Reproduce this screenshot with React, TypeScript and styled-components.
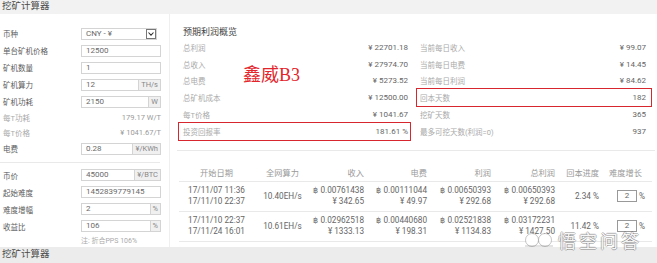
import React from "react";
import styled, {createGlobalStyle} from "styled-components";

const GlobalStyle = createGlobalStyle`
  html, body {
    margin: 0;
    padding: 0;
    background: #fff;
  }
  body {
    font-family: Roboto, "Noto Sans CJK SC", sans-serif;
    width: 657px;
    height: 263px;
    overflow: hidden;
  }
`;

const Page = styled.div`
  position: relative;
  width: 657px;
  height: 263px;
  display: flex;
  flex-flow: column;
  overflow: hidden;
`;

const Bar = styled.div<{$bottom?: boolean}>`
  height: ${p => p.$bottom ? 16 : 14}px;
  background: ${p => p.$bottom ? '#ececec' : '#f2f2f2'};
  color: #4a4a4a;
  font-size: 9.5px;
  line-height: ${p => p.$bottom ? 13 : 11}px;
  padding-left: 2px;
  white-space: nowrap;
`;

const Main = styled.div`
  display: flex;
  height: 233px;
  overflow: hidden;
`;

const Left = styled.div`
  width: 170px;
  box-sizing: border-box;
  border-right: 1px solid #efefef;
  padding: 11px 9px 0 3px;
`;

const FormRow = styled.div<{$h?: number}>`
  display: grid;
  grid-template-columns: 78px 80px;
  align-items: center;
  height: ${p => p.$h ?? 17}px;
  font-size: 7.5px;
`;

const Label = styled.span<{$muted?: boolean}>`
  color: ${p => p.$muted ? '#aaa' : '#5c5c5c'};
  white-space: nowrap;
`;

const Field = styled.div<{$w?: number}>`
  display: flex;
  box-sizing: border-box;
  width: ${p => p.$w ?? 80}px;
  height: 12px;
  border: 1px solid #d4d4d4;
  background: #fff;
`;

const FieldValue = styled.span`
  flex: 1;
  padding-left: 4px;
  font-size: 8px;
  line-height: 10px;
  color: #6a6a6a;
  white-space: nowrap;
`;

const Suffix = styled.span`
  border-left: 1px solid #d4d4d4;
  background: #f0f0f0;
  color: #888;
  font-size: 7.5px;
  line-height: 10px;
  padding: 0 2px;
  white-space: nowrap;
`;

const Arrow = styled.span`
  box-sizing: border-box;
  width: 10px;
  height: 10px;
  border: 1px solid #777;
  display: flex;
  align-items: center;
  justify-content: center;
`;

const Computed = styled.span`
  text-align: right;
  color: #999;
  font-size: 7.5px;
`;

const Divider = styled.div<{$inset?: number}>`
  height: 1px;
  background: #e9e9e9;
  margin: ${p => p.$inset ? `10px -${p.$inset}px 0` : '4.5px 0 4px -3px'};
`;

const Note = styled.div`
  margin-left: 78px;
  height: 12px;
  line-height: 12px;
  font-size: 7px;
  color: #aaa;
  white-space: nowrap;
`;

const Right = styled.div`
  flex: 1;
  padding: 11px 4px 0 9px;
`;

const SectionTitle = styled.div`
  height: 14px;
  line-height: 14px;
  padding-left: 4px;
  font-size: 9px;
  color: #444;
`;

const Summary = styled.div`
  display: grid;
  grid-template-columns: 231px 234px;
  column-gap: 7px;
`;

const SumCol = styled.div`
  display: flex;
  flex-flow: column;
`;

const SumRow = styled.div<{$right?: boolean, $hit?: boolean}>`
  display: flex;
  justify-content: space-between;
  align-items: center;
  height: 16.8px;
  padding: ${p => p.$right ? '0 5px 0 3px' : '0 2px 0 4px'};
  font-size: 7.5px;
  outline: ${p => p.$hit ? '1px solid #d7262e' : 'none'};

  & span:first-child {
    color: #aaa;
  }

  & span:last-child {
    color: #666;
    font-size: 8px;
  }
`;

const Table = styled.table`
  margin-top: 12px;
  width: 473px;
  border-collapse: collapse;
  table-layout: fixed;
  font-size: 8.2px;
  color: #666;
`;

const Th = styled.th<{$align?: string}>`
  height: 18px;
  padding: 0 3px 0 0;
  font-weight: normal;
  color: #999;
  text-align: ${p => p.$align ?? 'right'};
  white-space: nowrap;
`;

const Tr = styled.tr`
  border-top: 1px solid #e9e9e9;
  border-bottom: 1px solid #e9e9e9;
`;

const Td = styled.td<{$align?: string}>`
  height: 29px;
  padding: 0 3px 0 0;
  line-height: 11.5px;
  text-align: ${p => p.$align ?? 'right'};
  white-space: nowrap;
`;

const Growth = styled.div`
  display: flex;
  align-items: center;
  gap: 2px;
  padding-left: 15px;
  color: #666;
`;

const GrowthBox = styled.span`
  box-sizing: border-box;
  width: 20px;
  height: 12px;
  border: 1px solid #999;
  text-align: center;
  line-height: 10px;
  font-size: 8px;
`;

const Stamp = styled.div`
  position: absolute;
  left: 243px;
  top: 60px;
  font-family: "Liberation Serif", "Noto Sans CJK SC", serif;
  font-size: 18px;
  color: #e3242b;
  white-space: nowrap;
`;

const Mark = styled.div`
  position: absolute;
  left: 523px;
  top: 227px;
  display: flex;
  align-items: center;
  gap: 3px;
  font-size: 18px;
  letter-spacing: 3px;
  color: rgba(255, 255, 255, 0.95);
  text-shadow: 1px 0 0 rgba(0, 0, 0, 0.25), -1px 0 0 rgba(0, 0, 0, 0.25),
  0 1px 0 rgba(0, 0, 0, 0.25), 0 -1px 0 rgba(0, 0, 0, 0.25);
  white-space: nowrap;
`;

const inputs = [
    {label: '单台矿机价格', value: '12500'},
    {label: '矿机数量', value: '1'},
    {label: '矿机算力', value: '12', unit: 'TH/s'},
    {label: '矿机功耗', value: '2150', unit: 'W'},
];

const coinInputs = [
    {label: '币价', value: '45000', unit: '¥/BTC'},
    {label: '起始难度', value: '1452839779145'},
    {label: '难度增幅', value: '2', unit: '%'},
    {label: '收益比', value: '106', unit: '%'},
];

const totals = [
    ['总利润', '¥ 22701.18'],
    ['总收入', '¥ 27974.70'],
    ['总电费', '¥ 5273.52'],
    ['总矿机成本', '¥ 12500.00'],
    ['每T价格', '¥ 1041.67'],
    ['投资回报率', '181.61 %'],
];

const daily = [
    ['当前每日收入', '¥ 99.07'],
    ['当前每日电费', '¥ 14.45'],
    ['当前每日利润', '¥ 84.62'],
    ['回本天数', '182'],
    ['挖矿天数', '365'],
    ['最多可挖天数(利润=0)', '937'],
];

const periods = [
    {
        from: '17/11/07 11:36', to: '17/11/10 22:37', hash: '10.40EH/s',
        income: ['0.00761438', '342.65'], power: ['0.00111044', '49.97'],
        profit: ['0.00650393', '292.68'], total: ['0.00650393', '292.68'], progress: '2.34 %',
    },
    {
        from: '17/11/10 22:37', to: '17/11/24 16:01', hash: '10.61EH/s',
        income: ['0.02962518', '1333.13'], power: ['0.00440680', '198.31'],
        profit: ['0.02521838', '1134.83'], total: ['0.03172231', '1427.50'], progress: '11.42 %',
    },
];

const Input: React.FC<{value: string, unit?: string}> = ({value, unit}) =>
    <Field>
        <FieldValue>{value}</FieldValue>
        {unit && <Suffix>{unit}</Suffix>}
    </Field>;

const Money: React.FC<{pair: string[]}> = ({pair}) =>
    <>฿ {pair[0]}<br/>¥ {pair[1]}</>;

export default function App() {
    return <Page>
        <GlobalStyle/>
        <Bar>挖矿计算器</Bar>
        <Main>
            <Left>
                <FormRow>
                    <Label>币种</Label>
                    <Field $w={76}>
                        <FieldValue>CNY - ¥</FieldValue>
                        <Arrow>
                            <svg width="6" height="4" viewBox="0 0 6 4">
                                <path d="M0.5 0.5 L3 3.2 L5.5 0.5" fill="none" stroke="#333" strokeWidth="1.1"/>
                            </svg>
                        </Arrow>
                    </Field>
                </FormRow>
                {inputs.map(r => <FormRow key={r.label}>
                    <Label>{r.label}</Label>
                    <Input value={r.value} unit={r.unit}/>
                </FormRow>)}
                <FormRow $h={15}>
                    <Label $muted>每T功耗</Label>
                    <Computed>179.17 W/T</Computed>
                </FormRow>
                <FormRow $h={15}>
                    <Label $muted>每T价格</Label>
                    <Computed>¥ 1041.67/T</Computed>
                </FormRow>
                <FormRow>
                    <Label>电费</Label>
                    <Input value="0.28" unit="¥/KWh"/>
                </FormRow>
                <Divider/>
                {coinInputs.map(r => <FormRow key={r.label}>
                    <Label>{r.label}</Label>
                    <Input value={r.value} unit={r.unit}/>
                </FormRow>)}
                <Note>注: 折合PPS 106%</Note>
            </Left>
            <Right>
                <SectionTitle>预期利润概览</SectionTitle>
                <Summary>
                    <SumCol>
                        {totals.map(([k, v]) => <SumRow key={k} $hit={k === '投资回报率'}>
                            <span>{k}</span><span>{v}</span>
                        </SumRow>)}
                    </SumCol>
                    <SumCol>
                        {daily.map(([k, v]) => <SumRow key={k} $right $hit={k === '回本天数'}>
                            <span>{k}</span><span>{v}</span>
                        </SumRow>)}
                    </SumCol>
                </Summary>
                <Divider $inset={2}/>
                <Table>
                    <colgroup>
                        <col style={{width: 78}}/>
                        <col style={{width: 54}}/>
                        <col style={{width: 56}}/>
                        <col style={{width: 63}}/>
                        <col style={{width: 64}}/>
                        <col style={{width: 64}}/>
                        <col style={{width: 44}}/>
                        <col style={{width: 50}}/>
                    </colgroup>
                    <thead>
                    <tr>
                        <Th $align="center">开始日期</Th>
                        <Th $align="center">全网算力</Th>
                        <Th>收入</Th>
                        <Th>电费</Th>
                        <Th>利润</Th>
                        <Th>总利润</Th>
                        <Th>回本进度</Th>
                        <Th $align="center">难度增长</Th>
                    </tr>
                    </thead>
                    <tbody>
                    {periods.map(p => <Tr key={p.from}>
                        <Td $align="center">{p.from}<br/>{p.to}</Td>
                        <Td $align="center">{p.hash}</Td>
                        <Td><Money pair={p.income}/></Td>
                        <Td><Money pair={p.power}/></Td>
                        <Td><Money pair={p.profit}/></Td>
                        <Td><Money pair={p.total}/></Td>
                        <Td>{p.progress}</Td>
                        <Td $align="left">
                            <Growth><GrowthBox>2</GrowthBox>%</Growth>
                        </Td>
                    </Tr>)}
                    </tbody>
                </Table>
            </Right>
        </Main>
        <Bar $bottom>挖矿计算器</Bar>
        <Stamp>鑫威B3</Stamp>
        <Mark>
            <svg width="32" height="16" viewBox="0 0 32 16">
                <g fill="rgba(255,255,255,0.95)" stroke="rgba(0,0,0,0.28)" strokeWidth="0.8">
                    <circle cx="9" cy="8" r="6.5"/>
                    <circle cx="22" cy="8" r="6.5"/>
                    <path d="M2 14 H30" fill="none"/>
                </g>
            </svg>
            悟空问答
        </Mark>
    </Page>;
}
